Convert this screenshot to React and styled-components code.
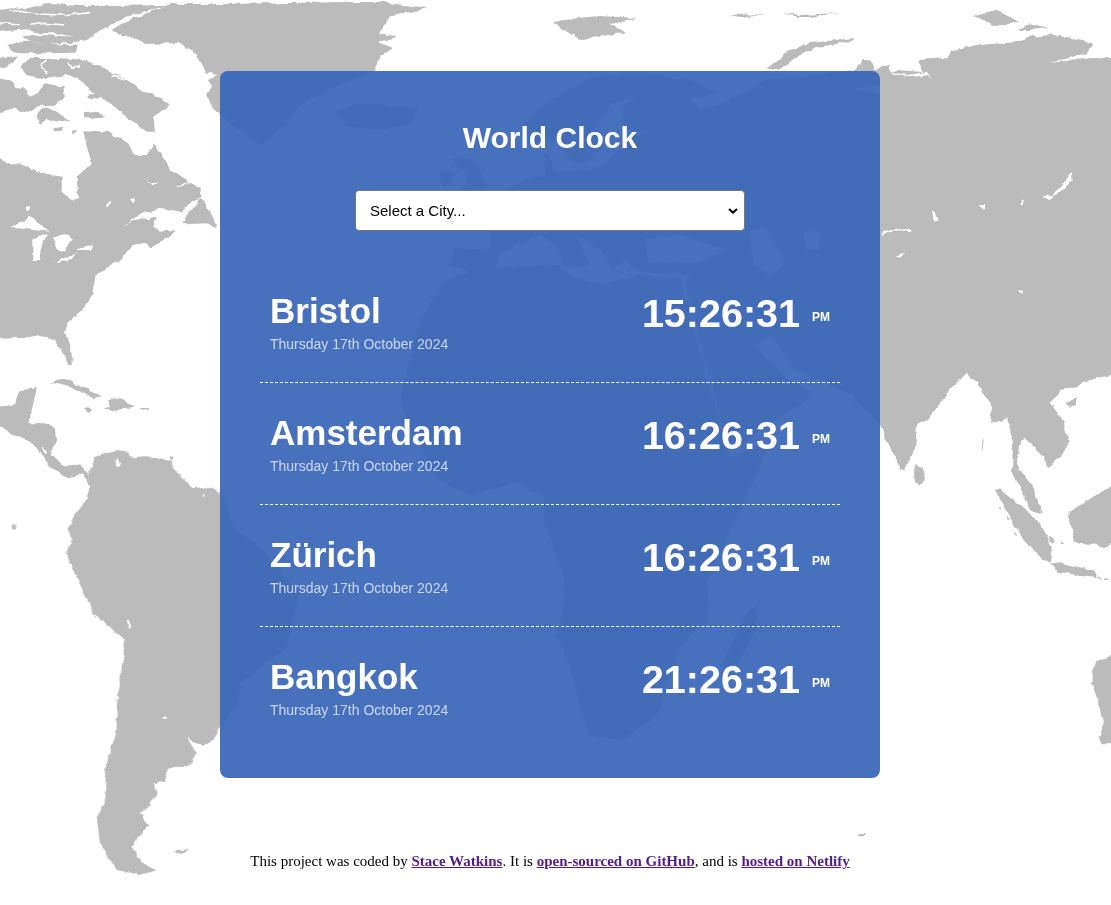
import React from "react";
import styled, { createGlobalStyle } from "styled-components";

const CLOCKS = [
  { city: "Bristol", time: "15:26:31" },
  { city: "Amsterdam", time: "16:26:31" },
  { city: "Zürich", time: "16:26:31" },
  { city: "Bangkok", time: "21:26:31" },
];

const DATE = "Thursday 17th October 2024";

const CHEVRON =
  "data:image/svg+xml,%3Csvg xmlns='http://www.w3.org/2000/svg' width='10' height='6'%3E%3Cpath d='M1 1l4 3.6L9 1' fill='none' stroke='%23000' stroke-width='2'/%3E%3C/svg%3E";

// traced land shapes, each list is in the coordinates of its group
const ARCTIC = [
  "M-40,35 L40,24 70,28 130,13 180,13 240,18 350,18 510,14 440,32 380,50 325,80 290,100 255,122 232,113 170,100 120,100 80,88 30,92 -40,100Z",
  "M65,108 L130,105 250,112 232,128 140,130 85,125Z",
  "M20,135 L70,125 150,130 235,138 225,158 130,160 60,160 30,155Z",
  "M62,205 L75,185 110,172 160,178 200,175 250,180 290,195 320,210 360,230 400,250 430,275 470,290 510,310 480,340 460,350 465,395 440,395 400,365 375,350 345,320 330,310 300,290 260,265 240,240 205,225 130,235 80,225Z",
  "M-40,170 L55,170 30,190 15,205 -40,195Z",
  "M-40,230 L30,240 50,265 60,265 75,260 90,290 115,280 135,250 190,260 195,290 175,310 140,320 115,310 95,340 65,335 40,325 -40,350Z",
  "M110,350 L125,320 165,335 210,360 170,365 140,355 125,375Z",
  "M250,340 L290,335 320,345 300,355 255,355Z",
  "M265,285 L300,278 298,295 270,298Z",
  "M160,385 L190,380 185,392 165,394Z M215,395 L230,392 228,403 218,403Z",
];

const ARCTIC_CHANNELS = [
  "M30,30 L110,42 190,45 270,35",
  "M90,75 L135,70 195,75",
  "M0,68 L60,72",
  "M140,180 C115,190 120,210 145,218",
  "M208,185 L215,205 240,200",
  "M335,225 L370,240",
];

const GREENLAND =
  "M172,4 L230,4 345,2 380,2 428,8 388,17 380,33 397,37 378,42 393,48 380,57 375,70 340,85 300,105 285,125 263,145 245,135 225,118 212,107 207,95 212,86 208,80 216,76 212,72 206,73 203,66 198,57 190,50 180,43 146,44 127,36 112,32 113,29 128,20 150,12Z";

const NORTH_AMERICA = [
  "M-40,455 L20,490 50,490 130,520 185,530 185,575 215,600 235,595 230,530 275,490 260,440 250,390 320,395 370,420 385,430 400,465 440,465 460,430 490,470 510,510 550,535 600,565 605,590 565,610 545,640 490,625 430,635 360,685 400,660 470,650 460,680 480,695 530,690 500,715 450,745 440,730 410,730 375,760 365,780 320,800 290,825 280,880 250,930 205,965 195,1000 215,1060 215,1095 205,1095 180,1040 170,1020 120,1005 70,1015 -40,1010Z",
  "M550,665 L565,645 600,595 625,630 640,650 650,685 620,670 575,672Z",
];

const NA_WATER = [
  "M30,685 L90,650 130,680 150,695 100,690 60,685Z",
  "M100,715 L150,700 130,720 115,780 100,780Z",
  "M160,715 L190,700 220,720 190,755 170,745Z",
  "M165,785 L235,760 200,785Z",
  "M225,750 L280,735 270,750Z",
  "M78,625 a7,7 0 1,0 14,0 a7,7 0 1,0 -14,0Z",
  "M390,597 L405,595 398,608Z",
  "M432,535 L445,550 480,548 455,556Z",
  "M530,560 L575,545 545,562Z",
  "M315,615 L330,600 322,622Z",
];

const CENTRAL_AMERICA =
  "M-40,145 L40,135 60,90 110,85 100,130 85,190 130,190 165,205 168,240 155,285 190,320 220,315 240,310 265,340 270,400 250,340 215,350 205,352 170,335 130,295 90,240 40,225 -40,175Z";

const CARIBBEAN = [
  "M150,75 L175,55 210,60 250,80 275,95 310,108 280,115 250,100 215,80 175,70Z",
  "M248,145 L265,142 278,150 265,155Z",
  "M310,140 L330,142 325,120 365,115 400,140 360,148 340,155Z",
  "M422,145 L445,143 445,149 428,152Z",
  "M510,290 L520,290 518,302 510,300Z",
];

const SOUTH_AMERICA =
  "M265,70 L285,25 315,10 345,5 352,0 380,5 400,25 430,22 480,25 515,35 520,55 555,95 580,115 610,110 660,125 680,170 690,210 710,240 780,290 900,430 860,590 720,700 715,760 660,830 645,865 610,885 570,870 558,850 565,870 590,910 570,945 500,960 495,995 460,1000 470,1030 450,1065 420,1090 445,1125 410,1170 395,1190 430,1240 470,1260 420,1275 350,1260 300,1180 290,1105 320,1040 315,1010 320,940 350,830 350,770 370,620 375,570 340,540 280,490 210,340 200,310 215,270 205,240 220,200 260,150 265,110Z";

const SA_WATER = [
  "M378,515 L388,512 398,530 390,533Z",
  "M488,800 L500,800 498,807 490,806Z",
  "M350,22 L360,40 355,50 347,48Z",
  "M610,128 L617,128 614,138Z",
];

const EURASIA =
  "M455,248 L490,250 490,225 470,205 505,190 525,180 545,175 545,150 555,172 590,170 610,160 625,140 650,130 625,130 622,105 640,95 610,105 595,130 600,150 585,165 570,160 555,140 530,145 522,125 550,100 590,78 640,73 690,80 715,92 690,100 700,110 730,100 765,80 800,76 855,70 863,60 872,62 876,72 883,67 890,65 890,72 897,70 923,72 918,60 947,58 953,50 977,45 1017,42 1027,37 1053,35 1083,40 1093,45 1087,53 1050,63 1092,58 1130,58 1130,370 1090,380 1073,388 1060,390 1050,403 1063,420 1069,443 1063,453 1047,468 1045,457 1033,445 1025,438 1020,440 1017,463 1020,470 1033,487 1043,515 1030,510 1020,487 1012,472 1013,443 1007,417 1003,420 990,423 992,407 977,383 967,373 950,388 943,400 927,420 917,425 915,450 903,472 898,465 887,440 880,425 850,395 830,385 795,370 770,335 755,345 790,380 812,392 805,402 729,450 685,285 690,275 640,272 625,260 612,270 600,250 575,235 590,265 565,268 555,245 540,235 515,245 500,255 495,270 470,272 450,265Z";

const ASIA_WATER = [
  "M645,240 L680,235 725,250 700,262 650,262Z",
  "M750,232 L765,228 785,262 770,277 752,262Z",
  "M805,232 L818,230 820,248 806,250Z",
  "M880,95 L850,88 880,85 Z",
];

const ISLANDS = [
  "M552,22 L578,18 599,16 637,18 611,23 624,33 607,35 582,40 569,32Z",
  "M731,15 L765,14 742,18Z",
  "M782,13 L801,15 839,13 809,17 797,17Z",
  "M765,70 L790,50 810,43 855,38 851,42 817,47 796,57 780,70Z",
  "M973,15 L997,10 1020,23 993,25Z",
  "M1018,30 L1030,23 1048,28 1030,30Z",
  "M1067,403 L1077,397 1077,405 1070,408Z",
  "M334,112 L360,103 418,108 410,125 370,130 345,125Z",
  "M451,160 L470,157 489,185 480,190 460,192 468,175Z",
  "M440,172 L455,170 452,185 441,186Z",
  "M721,667 L745,615 759,603 755,630 738,663Z",
  "M860,833 L866,833 864,836 858,836Z",
];

const AFRICA =
  "M470,272 L490,268 559,265 575,278 600,285 640,275 680,278 729,457 768,445 754,480 708,580 708,620 679,647 658,713 624,740 590,737 569,667 557,637 565,597 561,567 544,523 544,497 515,483 468,495 439,480 415,440 400,400 405,380 420,320 445,280Z";

const SUNDA = [
  "M585,270 L600,265 640,300 690,340 720,370 745,415 755,440 750,485 730,480 680,430 640,370Z",
  "M750,490 L790,490 830,500 880,510 890,535 830,525 775,515Z",
  "M805,340 L840,315 880,290 980,230 980,395 915,445 890,435 825,425 815,385Z",
  "M745,405 L760,415 765,430 750,420Z",
  "M782,425 L792,425 790,432 783,432Z",
  "M595,320 L605,325 600,328Z M620,345 L630,360 622,358Z M640,390 L650,405 643,403Z",
  "M890,530 L905,530 908,537 895,535Z M915,533 L925,533 925,540 915,540Z",
  "M548,118 L551,118 548,150 545,150Z",
  "M345,190 L365,205 375,235 360,258 345,250 342,215Z",
  "M875,820 L885,785 980,750 980,1030 905,1030 897,1015 910,975 895,905 875,850Z",
];

const ASIA_LAKES = [
  "M725,590 L760,585 790,550 815,517 818,540 780,578 745,597Z",
  "M245,715 L250,692 332,687 330,692 262,697Z",
  "M288,765 L316,763 305,773 295,772Z",
  "M540,615 L552,615 552,625 542,625Z",
  "M665,598 L673,595 668,613 665,612Z",
  "M658,868 L672,872 670,880 660,878Z",
  "M270,215 L320,225 380,215 400,240 385,225 325,232 285,225Z",
  "M398,640 L405,632 415,660 400,665Z",
];

const GlobalStyle = createGlobalStyle`
  html, body {
    margin: 0;
    padding: 0;
    background: #fff;
    overflow: hidden;
  }
`;

const Page = styled.div`
  position: relative;
  width: 1111px;
  height: 905px;
  overflow: hidden;
`;

const MapLayer = styled.svg`
  position: absolute;
  top: 0;
  left: 0;
  width: 1111px;
  height: 905px;
`;

const Land = styled.path`
  fill: #bbbbbb;
`;

const Water = styled.path`
  fill: #ffffff;
`;

const Channel = styled.path`
  fill: none;
  stroke: #ffffff;
  stroke-width: 5;
`;

const Content = styled.div`
  position: relative;
  width: 1100px;
  padding-top: 71px;
  display: flex;
  flex-direction: column;
  align-items: center;
`;

const Card = styled.main`
  width: 660px;
  box-sizing: border-box;
  padding: 30px 40px 29px;
  border-radius: 8px;
  background: rgba(55, 101, 183, 0.92);
  font-family: "Liberation Sans", Arial, sans-serif;
  color: #fff;
`;

const Title = styled.h1`
  margin: 0;
  height: 73px;
  line-height: 73px;
  font-size: 30px;
  font-weight: 700;
  text-align: center;
`;

const CityPicker = styled.select`
  display: block;
  width: 390px;
  height: 41px;
  margin: 16px auto 30px;
  padding: 0 24px 0 14px;
  border: 1px solid #767676;
  border-radius: 4px;
  appearance: none;
  font-family: "Liberation Sans", Arial, sans-serif;
  font-size: 15px;
  color: #000;
  background: #fff url("${CHEVRON}") no-repeat right 6px center;
`;

const ClockRow = styled.section`
  display: flex;
  justify-content: space-between;
  height: 122px;
  box-sizing: border-box;
  padding: 29px 10px 0;
  border-bottom: 1px dashed #fff;

  &:last-child {
    border-bottom: none;
  }
`;

const CityName = styled.h2`
  margin: 0;
  font-size: 35px;
  line-height: 42px;
  font-weight: 700;
`;

const CityDate = styled.div`
  margin-top: 4px;
  font-size: 14px;
  line-height: 16px;
  color: rgba(255, 255, 255, 0.7);
`;

const Time = styled.div`
  font-size: 39.5px;
  line-height: 46px;
  font-weight: 700;
`;

const Meridiem = styled.small`
  margin-left: 12px;
  font-size: 12px;
  vertical-align: 6px;
`;

const Footer = styled.footer`
  margin-top: 75px;
  font-family: "Liberation Serif", "Times New Roman", serif;
  font-size: 15px;
  line-height: 17px;
  color: #000;
  text-align: center;

  a {
    color: #551a8b;
    font-weight: 700;
  }
`;

const LandGroup = ({ at, paths = [], water = [], channels = [] }) => (
  <g transform={`translate(${at}) scale(0.33333)`}>
    {paths.map((d) => (
      <Land key={d} d={d} />
    ))}
    {water.map((d) => (
      <Water key={d} d={d} />
    ))}
    {channels.map((d) => (
      <Channel key={d} d={d} />
    ))}
  </g>
);

function WorldMap() {
  return (
    <MapLayer viewBox="0 0 1111 905" aria-hidden="true">
      <defs>
        {/* roughens the traced outlines into something like a coastline */}
        <filter id="coast" filterUnits="userSpaceOnUse" x="-20" y="-10" width="1160" height="930">
          <feTurbulence type="fractalNoise" baseFrequency="0.11" numOctaves="3" seed="7" />
          <feDisplacementMap in="SourceGraphic" scale="5" xChannelSelector="R" yChannelSelector="G" />
        </filter>
      </defs>
      <g filter="url(#coast)">
        <Land d={GREENLAND} />
        <Land d={EURASIA} />
        <Land d={AFRICA} />
        {ISLANDS.map((d) => (
          <Land key={d} d={d} />
        ))}
        {ASIA_WATER.map((d) => (
          <Water key={d} d={d} />
        ))}
        <LandGroup at="0,0" paths={[...ARCTIC, ...NORTH_AMERICA]} water={NA_WATER} channels={ARCTIC_CHANNELS} />
        <LandGroup at="0,360" paths={[CENTRAL_AMERICA, ...CARIBBEAN]} water={["M125,265 L132,263 142,280 136,282Z"]} />
        <LandGroup at="0,450" paths={[SOUTH_AMERICA, "M520,1205 L570,1197 555,1210 530,1212Z", "M38,225 L46,222 48,238 40,240Z"]} water={SA_WATER} />
        <LandGroup at="800,0" water={ASIA_LAKES} />
        <LandGroup at="800,400" paths={SUNDA} water={["M866,856 L884,880 875,880Z"]} />
      </g>
    </MapLayer>
  );
}

function ClockCard({ city, time }) {
  return (
    <ClockRow>
      <div>
        <CityName>{city}</CityName>
        <CityDate>{DATE}</CityDate>
      </div>
      <Time>
        {time}
        <Meridiem>PM</Meridiem>
      </Time>
    </ClockRow>
  );
}

export default function App() {
  return (
    <Page>
      <GlobalStyle />
      <WorldMap />
      <Content>
        <Card>
          <Title>World Clock</Title>
          <CityPicker defaultValue="">
            <option value="">Select a City...</option>
            <option value="london">London</option>
            <option value="tokyo">Tokyo</option>
          </CityPicker>
          {CLOCKS.map((clock) => (
            <ClockCard key={clock.city} city={clock.city} time={clock.time} />
          ))}
        </Card>
        <Footer>
          This project was coded by <a href="#stace">Stace Watkins</a>. It is{" "}
          <a href="#github">open-sourced on GitHub</a>, and is{" "}
          <a href="#netlify">hosted on Netlify</a>
        </Footer>
      </Content>
    </Page>
  );
}
